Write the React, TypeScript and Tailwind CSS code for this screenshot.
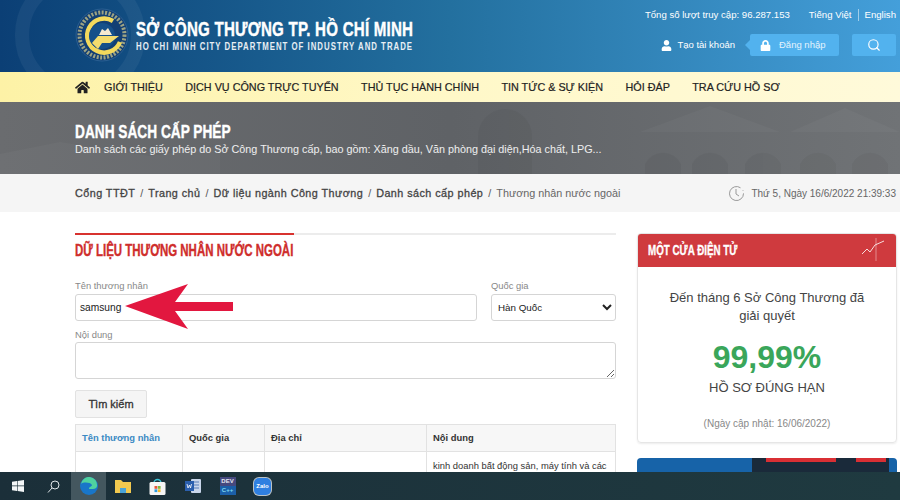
import { Search } from "lucide-react";
import { FaHome, FaLock, FaUser } from "react-icons/fa";

const navItems = [
  "GIỚI THIỆU",
  "DỊCH VỤ CÔNG TRỰC TUYẾN",
  "THỦ TỤC HÀNH CHÍNH",
  "TIN TỨC & SỰ KIỆN",
  "HỎI ĐÁP",
  "TRA CỨU HỒ SƠ",
];

const crumbs = ["Cổng TTĐT", "Trang chủ", "Dữ liệu ngành Công Thương", "Danh sách cấp phép"];

const Logo = () => (
  <svg width="54" height="54" viewBox="0 0 54 54" className="shrink-0">
    <circle cx="27" cy="27" r="26" fill="#123f74" stroke="#2a5f92" />
    <circle cx="27" cy="27" r="22.500" fill="none" stroke="#d9cf8a" strokeWidth="4" strokeDasharray="2 1.500" opacity="0.7" />
    <path d="M38 13a17 17 0 1 0 7 21" fill="none" stroke="#f3d95c" strokeWidth="4.500" />
    <circle cx="27" cy="28" r="13" fill="#15508a" />
    <path d="M17 35l6-7h21l-9 7H27l-4 6z" fill="#f3dc6d" />
    <path d="M24 27l3-6 3 2 3-3 4 7z" fill="#f5ead0" />
  </svg>
);

const BannerArt = () => (
  <svg viewBox="0 0 900 72" className="absolute inset-0 h-full w-full" preserveAspectRatio="none">
    <g fill="#000000" opacity="0.035">
      <path d="M478 72V34a27 27 0 0 1 54 0v38z" />
      <path d="M645 72V62a20 20 0 0 1 36 0v10zM692 72V62a20 20 0 0 1 36 0v10zM745 72V62a20 20 0 0 1 36 0v10zM800 72V62a20 20 0 0 1 36 0v10zM852 72V62a20 20 0 0 1 36 0v10z" />
    </g>
    <g fill="#ffffff" opacity="0.03">
      <path d="M640 30l70-26 70 26zM790 30l55-24 55 24zM0 72V52l60-12 90 14 70-10v28z" />
    </g>
  </svg>
);

const Taskbar = () => (
  <footer className="flex h-7 shrink-0 items-stretch bg-gradient-to-r from-[#1b2f39] to-[#1f3a40]">
    <div className="flex w-[35px] items-center justify-center">
      <svg width="12" height="12" viewBox="0 0 12 12" fill="#f4f7f8">
        <path d="M0 1.700l5-.7v4.600H0zM5.600.9L12 0v5.600H5.600zM0 6.300h5V11l-5-.7zM5.600 6.300H12V12l-6.400-.9z" />
      </svg>
    </div>
    <div className="flex w-[36px] items-center justify-center">
      <svg width="13" height="13" viewBox="0 0 13 13" fill="none" stroke="#dfe5e8" strokeWidth="1">
        <circle cx="8" cy="5" r="4" />
        <path d="M5 8l-4 4.500" />
      </svg>
    </div>
    <div className="flex w-[35px] items-center justify-center bg-[#44575f]">
      <svg width="18" height="18" viewBox="0 0 18 18">
        <circle cx="9" cy="9" r="9" fill="#1976c9" />
        <path d="M1 7a8 8 0 0 1 16 2c0 2-2 3-4 3H9c0-3 3-2 3-4-2-3-9-3-11-1z" fill="#4fd2a0" />
      </svg>
    </div>
    <div className="flex w-[34px] items-center justify-center">
      <svg width="16" height="14" viewBox="0 0 16 14">
        <path d="M0 1h6l2 2h8v11H0z" fill="#f2c94f" />
        <path d="M5 9h6v5H5z" fill="#4aa3d8" />
      </svg>
    </div>
    <div className="flex w-[35px] items-center justify-center">
      <svg width="17" height="17" viewBox="0 0 17 17">
        <path d="M5 5a3.500 3.500 0 0 1 7 0" fill="none" stroke="#3cc5d8" strokeWidth="1.300" />
        <rect x="0.500" y="4" width="16" height="13" rx="1.500" fill="#f5f5f5" />
        <rect x="5.500" y="8" width="2.800" height="2.800" fill="#e8553a" />
        <rect x="8.800" y="8" width="2.800" height="2.800" fill="#7cb83f" />
        <rect x="5.500" y="11.300" width="2.800" height="2.800" fill="#2d9be0" />
        <rect x="8.800" y="11.300" width="2.800" height="2.800" fill="#f3b92d" />
      </svg>
    </div>
    <div className="flex w-[35px] items-center justify-center">
      <svg width="16" height="16" viewBox="0 0 16 16">
        <rect x="6" y="1" width="10" height="14" rx="1" fill="#c9d6ea" />
        <path d="M8 4h6M8 7h6M8 10h6" stroke="#5a7fb8" />
        <rect x="0" y="3" width="9" height="10" fill="#2b5fad" />
        <path d="M2 6l1 4 1.500-3 1 3 1-4" fill="none" stroke="#fff" strokeWidth="0.800" />
      </svg>
    </div>
    <div className="flex w-[35px] items-center justify-center">
      <div className="flex h-[18px] w-[16px] flex-col bg-[#1b5fa8] text-center text-[6px] font-bold leading-[9px]">
        <span className="bg-[#45497f] text-[#e8e8f0]">DEV</span>
        <span className="text-[#7fd8ee]">C++</span>
      </div>
    </div>
    <div className="flex w-[35px] items-center justify-center">
      <div className="flex h-[17px] w-[17px] items-center justify-center rounded-[5px] bg-[#2f7fe0] ring-1 ring-white/70">
        <span className="text-[6px] font-bold text-white">Zalo</span>
      </div>
    </div>
  </footer>
);

const App = () => {
  return (
    <div className="flex h-[500px] w-[900px] flex-col overflow-hidden bg-white font-['Liberation_Sans',Arial,sans-serif] text-[#333]">
      <header className="relative flex h-[72px] shrink-0 items-center justify-between overflow-hidden bg-gradient-to-r from-[#0b3f75] via-[#23709f] to-[#449fda] pl-[75px] pr-[4px]">
        <div className="absolute left-[15px] top-[-30px] h-[130px] w-[130px] rounded-full border-[14px] border-white/5" />
        <div className="relative flex -translate-y-px items-center gap-[7px]">
          <Logo />
          <div className="text-white">
            <p className="origin-left scale-x-[0.72] whitespace-nowrap text-[21px] font-bold leading-[24px] tracking-[0.3px] [-webkit-text-stroke:0.4px_#fff]">SỞ CÔNG THƯƠNG TP. HỒ CHÍ MINH</p>
            <p className="origin-left scale-x-[0.78] whitespace-nowrap text-[10px] font-bold leading-[12px] tracking-[1.300px] text-white/90">HO CHI MINH CITY DEPARTMENT OF INDUSTRY AND TRADE</p>
          </div>
        </div>
        <div className="relative flex flex-col items-end gap-[13px] self-start pt-[9px]">
          <div className="flex items-center text-[9.600px] leading-[12px] text-white">
            <span>Tổng số lượt truy cập: 96.287.153</span>
            <span className="ml-[19px]">Tiếng Việt</span>
            <span className="mx-[6px] h-[12px] w-px bg-white/50" />
            <span>English</span>
          </div>
          <div className="flex items-center text-[9.500px] text-white">
            <FaUser size={11} className="mr-[5px]" />
            <span>Tạo tài khoản</span>
            <div className="relative ml-[15px] flex h-[22px] w-[89px] items-center rounded-[2px] bg-[#52b2ee] pl-[10px]">
              <div className="absolute left-[-5px] top-[6px] h-0 w-0 border-y-[5px] border-r-[5px] border-y-transparent border-r-[#52b2ee]" />
              <FaLock size={11} />
              <span className="ml-[8px] text-[#e4f3fd]">Đăng nhập</span>
            </div>
            <div className="ml-[13px] flex h-[22px] w-[44px] items-center justify-center rounded-[2px] bg-[#52b2ee]">
              <Search size={14} strokeWidth={2} />
            </div>
          </div>
        </div>
      </header>

      <nav className="flex h-[30px] shrink-0 items-center bg-gradient-to-r from-[#fdf2a6] via-[#fff8c8] to-[#fffada] pl-[75px] text-[10.800px] text-[#222] [-webkit-text-stroke:0.2px_#222]">
        <FaHome size={15} className="mr-[14px]" />
        <div className="flex gap-[22.400px]">
          {navItems.map((item) => (
            <a key={item} className="whitespace-nowrap">{item}</a>
          ))}
        </div>
      </nav>

      <section className="relative h-[72px] shrink-0 overflow-hidden bg-gradient-to-r from-[#6a6c6f] via-[#5f6266] to-[#707376] pl-[75px] pt-[19px] text-white">
        <BannerArt />
        <h1 className="relative origin-left scale-x-[0.72] whitespace-nowrap text-[19px] font-bold leading-[21px] [-webkit-text-stroke:0.4px_#fff]">DANH SÁCH CẤP PHÉP</h1>
        <p className="relative text-[10.800px] leading-[14px] text-white/90">Danh sách các giấy phép do Sở Công Thương cấp, bao gồm: Xăng dầu, Văn phòng đại diện,Hóa chất, LPG...</p>
      </section>

      <div className="flex h-[38px] shrink-0 items-center justify-between bg-[#f5f5f5] pl-[75px] pr-[4px] text-[10.800px]">
        <div className="flex items-center gap-[5px] whitespace-nowrap">
          {crumbs.map((crumb) => (
            <span key={crumb} className="flex gap-[5px]">
              <span className="tracking-[0.45px] text-[#444] [-webkit-text-stroke:0.3px_#444]">{crumb}</span>
              <span className="text-[#555]">/</span>
            </span>
          ))}
          <span className="text-[#666]">Thương nhân nước ngoài</span>
        </div>
        <div className="flex items-center gap-[6px] text-[10px] text-[#666]">
          <svg width="17" height="17" viewBox="0 0 17 17" fill="none" stroke="#999" strokeWidth="1">
            <path d="M15.500 8.500a7 7 0 1 1-3-5.700" />
            <path d="M8 4v5l3 2" />
            <path d="M15 5v1M15.500 8v1" stroke="#bbb" />
          </svg>
          <span>Thứ 5, Ngày 16/6/2022 21:39:33</span>
        </div>
      </div>

      <main className="flex min-h-0 flex-1 items-start gap-[21px] overflow-hidden pl-[75px] pt-[21px]">
        <div className="relative w-[541px] shrink-0">
          <div className="flex h-[2px] bg-[#ececec]">
            <div className="h-[2px] w-[219px] bg-[#d8322f]" />
          </div>
          <h2 className="mt-[5px] origin-left scale-x-[0.675] whitespace-nowrap text-[17px] font-bold leading-[22px] text-[#cf2e2c] [-webkit-text-stroke:0.4px_#cf2e2c]">DỮ LIỆU THƯƠNG NHÂN NƯỚC NGOÀI</h2>

          <div className="mt-[17px] flex gap-[14px]">
            <label className="w-[402px]">
              <span className="block text-[9.400px] leading-[14px] text-[#888]">Tên thương nhân</span>
              <div className="mt-[1px] flex h-[27px] items-center rounded-[3px] border border-[#d5d5d5] pl-[4px] text-[10.200px] text-[#222]">samsung</div>
            </label>
            <label className="flex-1">
              <span className="block text-[9.400px] leading-[14px] text-[#888]">Quốc gia</span>
              <select className="mt-[1px] h-[27px] w-full rounded-[3px] border border-[#d5d5d5] bg-white pl-[2px] text-[9.800px] text-[#222]">
                <option>Hàn Quốc</option>
              </select>
            </label>
          </div>

          <span className="mt-[7px] block text-[9.400px] leading-[14px] text-[#888]">Nội dung</span>
          <textarea className="block h-[37px] w-full rounded-[3px] border border-[#d5d5d5]" />

          <button className="mt-[11px] flex h-[28px] w-[72px] items-center justify-center rounded-[2px] border border-[#e2e2e2] bg-[#f5f5f5] text-[11px] text-[#333] [-webkit-text-stroke:0.3px_#333]">Tìm kiếm</button>

          <div className="mt-[6px] grid grid-cols-[107px_82px_162px_188px] border-l border-r border-t border-[#e2e2e2] text-[9.400px]">
            <div className="flex h-[27px] items-center border-b border-r border-[#e2e2e2] bg-[#f7f7f7] pl-[6px] font-bold text-[#3b8ac4]">Tên thương nhân</div>
            <div className="flex h-[27px] items-center border-b border-r border-[#e2e2e2] bg-[#f7f7f7] pl-[6px] font-bold">Quốc gia</div>
            <div className="flex h-[27px] items-center border-b border-r border-[#e2e2e2] bg-[#f7f7f7] pl-[6px] font-bold">Địa chỉ</div>
            <div className="flex h-[27px] items-center border-b border-[#e2e2e2] bg-[#f7f7f7] pl-[6px] font-bold">Nội dung</div>
            <div className="border-r border-[#e2e2e2]" />
            <div className="border-r border-[#e2e2e2]" />
            <div className="border-r border-[#e2e2e2]" />
            <div className="px-[6px] pt-[7px] text-[9.400px] leading-[14px]">kinh doanh bất động sản, máy tính và các sản phẩm điện tử</div>
          </div>

          <svg width="110" height="46" viewBox="0 0 110 46" className="absolute left-[50px] top-[51px]">
            <path d="M0 22L63 0 50 18H108V27H50L63 45z" fill="#e2173f" />
          </svg>
        </div>

        <aside className="w-[260px] shrink-0">
          <div className="overflow-hidden rounded-[4px] border border-[#e6e6e6] shadow-[0_1px_2px_rgba(0,0,0,0.08)]">
            <div className="-m-px flex h-[34px] items-center justify-between rounded-t-[4px] bg-[#cf3a3e] pl-[11px] pr-[12px]">
              <span className="origin-left scale-x-[0.7] whitespace-nowrap text-[14px] font-bold text-white [-webkit-text-stroke:0.3px_#fff]">MỘT CỬA ĐIỆN TỬ</span>
              <svg width="24" height="24" viewBox="0 0 24 24" fill="none" stroke="#f7dcdc" strokeWidth="1">
                <path d="M1 16l5-5 3 3 5-7 9-4" />
                <path d="M15 0v23" strokeWidth="0.500" />
              </svg>
            </div>
            <div className="flex h-[176px] flex-col items-center px-[20px] pt-[23px] text-center">
              <p className="text-[13px] leading-[18px] text-[#444]">Đến tháng 6 Sở Công Thương đã giải quyết</p>
              <p className="mt-[13px] text-[32px] font-bold leading-[38px] text-[#3aa65a]">99,99%</p>
              <p className="mt-[4px] text-[13px] leading-[16px] text-[#444]">HỒ SƠ ĐÚNG HẠN</p>
              <p className="mt-[22px] text-[10px] leading-[12px] text-[#888]">(Ngày cập nhật: 16/06/2022)</p>
            </div>
          </div>
          <div className="mt-[15px] flex h-[30px] overflow-hidden rounded-t-[4px] bg-[#1763a8]">
            <div className="w-[115px] pl-[11px] pt-[8px]">
              <span className="origin-left scale-x-[0.8] whitespace-nowrap text-[12px] font-bold text-white">DANH MỤC</span>
            </div>
            <div className="flex-1 bg-[#1a2a3a]">
              <div className="flex h-[4px] gap-[20px] pl-[14px]">
                <div className="w-[70px] bg-[#d92f34]" />
                <div className="w-[30px] bg-[#d92f34]" />
              </div>
            </div>
            <div className="w-[8px]" />
          </div>
        </aside>
      </main>

      <Taskbar />
    </div>
  );
};

export default App;
